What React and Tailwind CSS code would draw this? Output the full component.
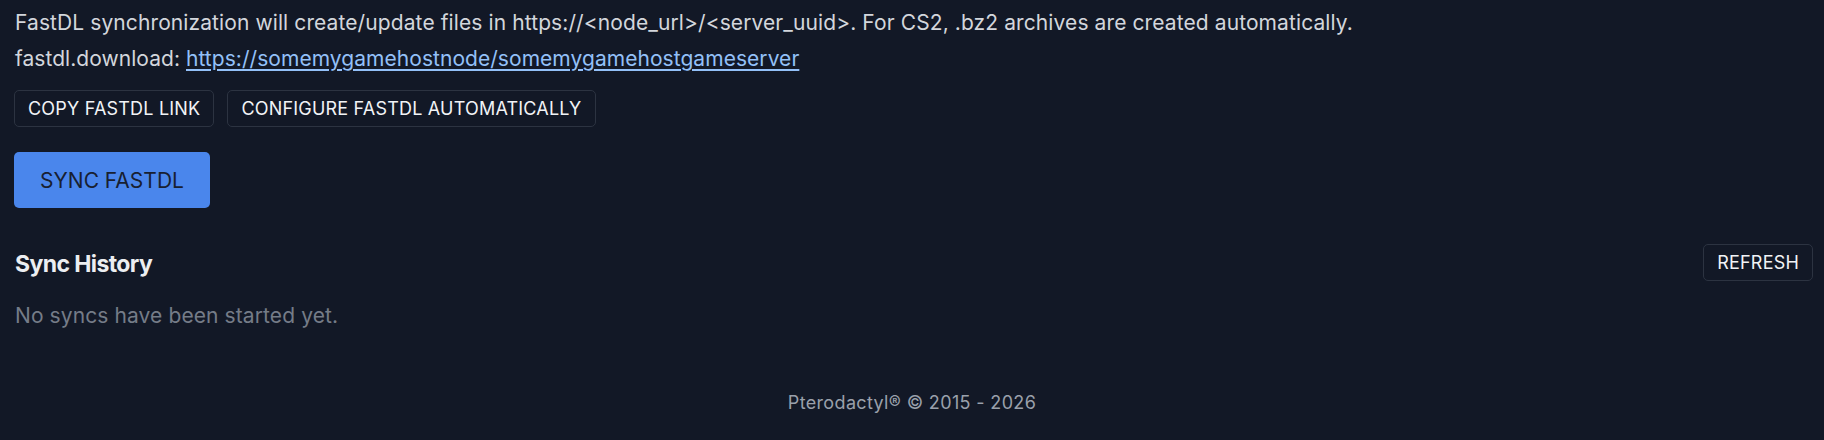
import React from 'react'

const FONT = { fontFamily: 'Inter, "Noto Sans", sans-serif' }

const OutlineButton = ({ children }) => (
  <button className="h-[37px] px-[13px] rounded-[5px] border border-[#2c3341] bg-[#121826] text-[18px] tracking-[0.2px] text-[#f1f3f6] uppercase leading-none">
    {children}
  </button>
)

export default function App() {
  return (
    <div className="w-[1824px] h-[440px] bg-[#121826] flex flex-col overflow-hidden" style={FONT}>
      <div className="pl-[15px] pr-[11px] pt-[6px]">
        {/* Info */}
        <p className="text-[21px] leading-[33px] tracking-[0.1px] text-[#d3d6dc]">
          FastDL synchronization will create/update files in https://&lt;node_url&gt;/&lt;server_uuid&gt;. For CS2, .bz2 archives are created automatically.
        </p>
        <p className="mt-[3px] text-[21px] leading-[33px] tracking-[0.05px] text-[#d3d6dc]">
          fastdl.download:{' '}
          <a href="#" className="text-[#93c0f8] underline underline-offset-[3px]">
            https://somemygamehostnode/somemygamehostgameserver
          </a>
        </p>

        {/* Actions */}
        <div className="flex gap-[13px] mt-[15px] -ml-px">
          <OutlineButton>Copy FastDL Link</OutlineButton>
          <OutlineButton>Configure FastDL Automatically</OutlineButton>
        </div>

        <button className="mt-[25px] -ml-px h-[56px] w-[196px] rounded-[5px] bg-[#4a86ec] text-[21px] text-[#182031] uppercase leading-none">
          Sync FastDL
        </button>

        {/* Sync History */}
        <div className="flex items-start justify-between mt-[36px]">
          <h2 className="mt-[2px] text-[23px] leading-[37px] font-bold text-[#eceef1] tracking-[-0.6px]">Sync History</h2>
          <OutlineButton>Refresh</OutlineButton>
        </div>
        <p className="mt-[16px] text-[21px] leading-[33px] tracking-[0.1px] text-[#757c88]">No syncs have been started yet.</p>
      </div>

      <div className="mt-auto mb-[24px] text-center text-[18px] text-[#9aa0ab] tracking-[0.35px]">
        Pterodactyl® © 2015 - 2026
      </div>
    </div>
  )
}
